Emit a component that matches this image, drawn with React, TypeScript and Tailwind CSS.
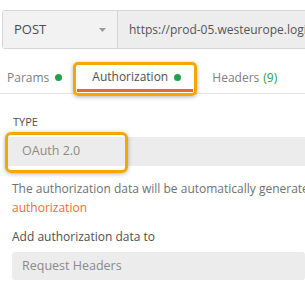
import React from 'react';

const Dot: React.FC = () => (
  <span className="inline-block h-[7px] w-[7px] rounded-full bg-[#22a04b]"></span>
);

const App: React.FC = () => {
  return (
    <div className="relative h-[284px] w-[305px] overflow-hidden bg-white font-['Open_Sans',sans-serif]">
      {/* request bar */}
      <div className="ml-[2px] mt-[10px] flex h-[39px] w-[330px] rounded-[3px] border border-[#d6d6d6] bg-[#ededed]">
        <div className="flex w-[115px] shrink-0 items-center justify-between border-r border-[#d6d6d6] bg-[#f2f2f2] pl-[11px] pr-[11px] text-[13px] text-[#4a4a4a]">
          <span>POST</span>
          <svg width="7" height="4" viewBox="0 0 7 4">
            <path d="M0 0 L7 0 L3.5 4 Z" fill="#9a9a9a" />
          </svg>
        </div>
        <div className="flex items-center whitespace-nowrap pl-[11px] text-[12px] text-[#555]">
          https://prod-05.westeurope.logic.azure.com
        </div>
      </div>

      {/* tabs */}
      <div className="mt-[13px] flex h-[32px] items-start border-b border-[#e6e6e6] text-[12px]">
        <div className="ml-[7px] flex h-[31px] items-center gap-[6px] text-[#808080]">
          <span>Params</span>
          <Dot />
        </div>
        <div className="ml-[11px] flex h-[34px] w-[124px] flex-col rounded-[5px] border-[3px] border-[#f5a700] shadow-[0_1px_4px_rgba(0,0,0,0.3)]">
          <div className="mt-[4px] flex h-[16px] items-center gap-[6px] pl-[16px] text-[#505050]">
            <span className="leading-[16px]">Authorization</span>
            <Dot />
          </div>
          <div className="mx-[1px] mt-[4px] h-[3px] bg-[#e8673c]"></div>
        </div>
        <div className="ml-[15px] flex h-[31px] items-center gap-[4px] text-[#808080]">
          <span>Headers</span>
          <span className="text-[#2e9e4d]">(9)</span>
        </div>
      </div>

      {/* type */}
      <div className="ml-[13px] mt-[21px] text-[11px] leading-[14px] text-[#505050]">TYPE</div>
      <div className="relative ml-[8px] mt-[8px] flex h-[29px] items-center bg-[#ececec] pl-[14px] text-[12.5px] text-[#8a8a8a]">
        OAuth 2.0
        <div className="absolute left-[-3px] top-[-5px] h-[41px] w-[123px] rounded-[6px] border-[3px] border-[#f5a700] shadow-[0_1px_4px_rgba(0,0,0,0.3)]"></div>
      </div>

      {/* description */}
      <div className="ml-[12px] mt-[13px] whitespace-nowrap text-[12px] leading-[19px] text-[#707070]">
        <div>The authorization data will be automatically generated when you send the request.</div>
        <div className="text-[#f26b3a]">authorization</div>
      </div>

      <div className="ml-[12px] mt-[12px] text-[12px] leading-[16px] text-[#505050]">Add authorization data to</div>
      <div className="ml-[12px] mt-[7px] flex h-[28px] items-center rounded-[3px] bg-[#ececec] pl-[10px] text-[12.5px] text-[#8a8a8a]">
        Request Headers
      </div>
    </div>
  );
};

export default App;
